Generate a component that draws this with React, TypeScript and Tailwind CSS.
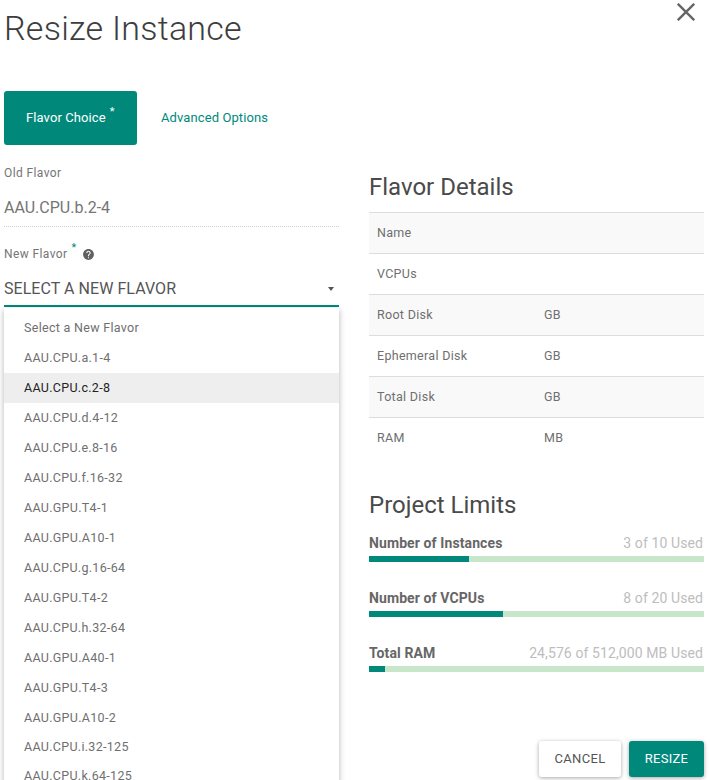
const flavors = [
  "Select a New Flavor", "AAU.CPU.a.1-4", "AAU.CPU.c.2-8", "AAU.CPU.d.4-12", "AAU.CPU.e.8-16", "AAU.CPU.f.16-32",
  "AAU.GPU.T4-1", "AAU.GPU.A10-1", "AAU.CPU.g.16-64", "AAU.GPU.T4-2", "AAU.CPU.h.32-64", "AAU.GPU.A40-1",
  "AAU.GPU.T4-3", "AAU.GPU.A10-2", "AAU.CPU.i.32-125", "AAU.CPU.k.64-125",
];
const details = [
  ["Name", ""], ["VCPUs", ""], ["Root Disk", "GB"], ["Ephemeral Disk", "GB"], ["Total Disk", "GB"], ["RAM", "MB"],
];
const limits = [
  { name: "Number of Instances", used: "3 of 10 Used", pct: 29.9 },
  { name: "Number of VCPUs", used: "8 of 20 Used", pct: 40 },
  { name: "Total RAM", used: "24,576 of 512,000 MB Used", pct: 4.8 },
];

export default function App() {
  return (
    <div className="h-[780px] w-[710px] overflow-hidden bg-white font-['Roboto',sans-serif] text-[#5f5f5f]">
      <div className="flex h-[91px] items-start justify-between pl-1 pr-[15px]">
        <h1 className="mt-[6px] text-[34px] leading-[44px] font-light tracking-[0.25px] text-[#3d3d3d]">Resize Instance</h1>
        <svg width="18" height="18" viewBox="0 0 18 18" className="mt-[3px]" stroke="#666666" strokeWidth="2.4" fill="none">
          <path d="M0.8 0.8 L17.2 17.2 M17.2 0.8 L0.8 17.2" />
        </svg>
      </div>
      <div className="flex items-center pl-1">
        <div className="flex h-[54px] w-[133px] items-center justify-start rounded-[3px] bg-[#00897b] pl-[22px] text-[13px] tracking-[0.1px] text-white">
          <span>Flavor Choice</span>
          <span className="relative top-[-7px] ml-[4px] text-[11px] leading-none">*</span>
        </div>
        <div className="ml-[24px] text-[13px] tracking-[0.1px] text-[#00897b]">Advanced Options</div>
      </div>
      <div className="flex gap-[30px] pl-1">
        <div className="relative w-[335px]">
          <div className="mt-[21px] text-[12px] leading-[15px] tracking-[0.4px] text-[#757575]">Old Flavor</div>
          <div className="mt-[16px] border-b border-dotted border-[#d0d0d0] pb-[7px] text-[16px] leading-[22px] text-[#757575]">AAU.CPU.b.2-4</div>
          <div className="mt-[20px] flex items-center text-[12px] leading-[15px] tracking-[0.4px] text-[#757575]">
            <span>New Flavor</span>
            <span className="relative top-[-7px] ml-[4px] text-[11px] leading-none text-[#00897b]">*</span>
            <svg width="13" height="13" viewBox="0 0 24 24" className="ml-[5px]" fill="#616161">
              <path d="M12 2C6.48 2 2 6.48 2 12s4.48 10 10 10 10-4.48 10-10S17.52 2 12 2zm1 17h-2v-2h2v2zm2.07-7.75l-.9.92C13.45 12.9 13 13.5 13 15h-2v-.5c0-1.1.45-2.1 1.17-2.83l1.24-1.26c.37-.36.59-.86.59-1.41 0-1.1-.9-2-2-2s-2 .9-2 2H8c0-2.21 1.79-4 4-4s4 1.79 4 4c0 .88-.36 1.68-.93 2.25z" />
            </svg>
          </div>
          <div className="mt-[9px] flex h-[36px] items-center justify-between border-b-2 border-[#00897b] pt-[2px] pr-[5px] text-[16px] tracking-[0.05px] text-[#555555]">
            <span>SELECT A NEW FLAVOR</span>
            <span className="h-0 w-0 border-x-[3.5px] border-t-[4px] border-x-transparent border-t-[#555555]" />
          </div>
          <div className="absolute top-[163px] left-0 w-[335px] bg-white pt-[5px] pb-1 shadow-[0_2px_6px_rgba(0,0,0,0.3)]">
            {flavors.map((f, i) => (
              <div key={f} className={`flex items-center pl-[20px] text-[12.5px] tracking-[0.3px] ${i < 14 ? "h-[30px]" : "h-[29px]"} ${i === 2 ? "bg-[#eeeeee] text-[#222222]" : "text-[#6f6f6f]"}`}>
                {f}
              </div>
            ))}
          </div>
        </div>
        <div className="w-[335px]">
          <h2 className="mt-[27px] text-[24px] leading-[30px] text-[#4a4a4a]">Flavor Details</h2>
          <div className="mt-[10px] border-t border-[#dddddd]">
            {details.map(([k, v], i) => (
              <div key={k} className={`flex h-[41px] items-center border-[#dddddd] pl-2 text-[12.5px] tracking-[0.3px] text-[#6f6f6f] ${i % 2 === 0 ? "bg-[#f9f9f9]" : ""} ${i < 5 ? "border-b" : ""}`}>
                <span className="w-[167px]">{k}</span>
                <span>{v}</span>
              </div>
            ))}
          </div>
          <h2 className="mt-[31px] text-[24px] leading-[30px] text-[#4a4a4a]">Project Limits</h2>
          <div className="mt-[13px] flex flex-col gap-[26px]">
            {limits.map((l) => (
              <div key={l.name}>
                <div className="flex h-[20px] items-center justify-between text-[14px] tracking-[0.1px]">
                  <span className="font-bold text-[#666666]">{l.name}</span>
                  <span className="pr-px tracking-[0.1px] text-[#bdbdbd]">{l.used}</span>
                </div>
                <div className="mt-[3px] h-[6px] bg-[#c8e6c9]">
                  <div className="h-full bg-[#00897b]" style={{ width: `${l.pct}%` }} />
                </div>
              </div>
            ))}
          </div>
          <div className="mt-[69px] flex justify-end gap-2">
            <button className="h-[36px] w-[82px] rounded-[3px] bg-white text-[13px] tracking-[0.3px] text-[#555555] shadow-[0_1px_4px_rgba(0,0,0,0.35)]">CANCEL</button>
            <button className="h-[36px] w-[75px] rounded-[3px] bg-[#00897b] text-[13px] tracking-[0.3px] text-white shadow-[0_1px_4px_rgba(0,0,0,0.35)]">RESIZE</button>
          </div>
        </div>
      </div>
    </div>
  );
}
